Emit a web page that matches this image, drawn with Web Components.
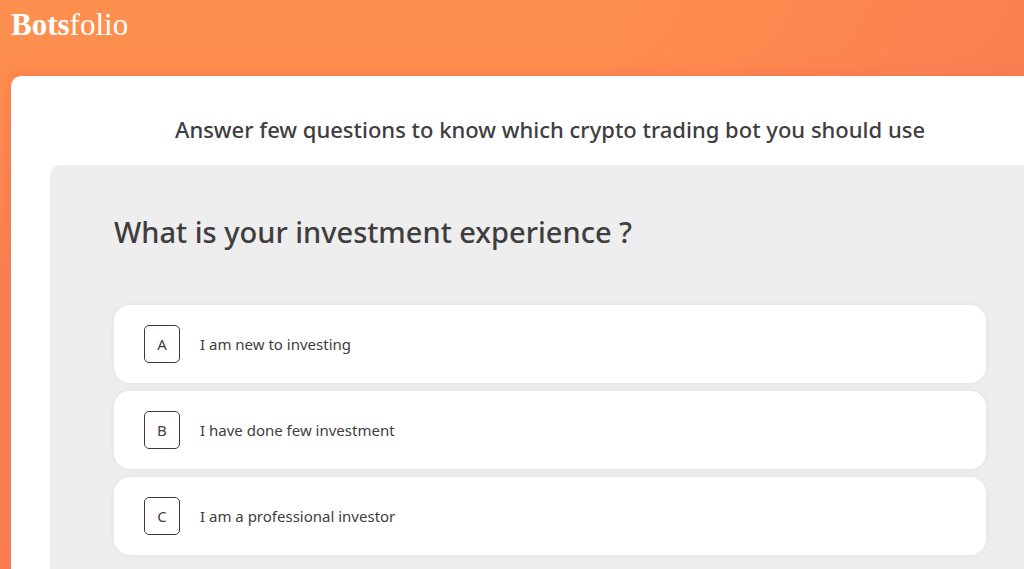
<!DOCTYPE html>
<html lang="en">
<head>
<meta charset="utf-8">
<meta name="viewport" content="width=device-width, initial-scale=1">
<title>Botsfolio</title>
<style>
  body {
    margin: 0;
    font-family: "Noto Sans", "Open Sans", sans-serif;
    color: #3f3d40;
  }
</style>
</head>
<body>
<quiz-page>
  <brand-logo slot="brand"></brand-logo>
  <quiz-panel>
    <span slot="title">Answer few questions to know which crypto trading bot you should use</span>
    <quiz-question>
      <span slot="question">What is your investment experience ?</span>
      <quiz-option key="A">I am new to investing</quiz-option>
      <quiz-option key="B">I have done few investment</quiz-option>
      <quiz-option key="C">I am a professional investor</quiz-option>
    </quiz-question>
  </quiz-panel>
</quiz-page>

<script>
class BaseElement extends HTMLElement {
  constructor() {
    super();
    this.attachShadow({ mode: "open" }).innerHTML = this.constructor.markup;
  }
}

customElements.define("quiz-page", class extends BaseElement {
  static markup = `
    <style>
      :host {
        display: flex;
        flex-direction: column;
        min-height: 100vh;
        background:
          linear-gradient(120deg, rgba(250, 127, 80, 0) 46%, #fa7f50 78%),
          linear-gradient(#ff8f4f 16%, #fa7f50 50%);
        overflow: hidden;
      }
      header { padding: 7px 11px 33px; }
      /* the sheet runs past the right side of the window */
      main {
        display: flex;
        flex: 1;
        margin: 0 -65px 0 11px;
      }
      ::slotted(quiz-panel) { flex: 1; }
    </style>
    <header><slot name="brand"></slot></header>
    <main><slot></slot></main>`;
});

customElements.define("brand-logo", class extends BaseElement {
  static markup = `
    <style>
      :host { display: flex; }
      a {
        font: 31px/36px "Liberation Serif", "Times New Roman", serif;
        color: #fff;
        text-decoration: none;
      }
    </style>
    <a href="#"><b>Bots</b>folio</a>`;
});

customElements.define("quiz-panel", class extends BaseElement {
  static markup = `
    <style>
      :host {
        display: flex;
        flex-direction: column;
        padding: 35px 39px 0;
        background: #fff;
        border-radius: 10px 10px 0 0;
        box-shadow: 0 0 16px 2px #f87850;
      }
      h1 {
        margin: 0 0 18px;
        font-size: 22px;
        line-height: 36px;
        font-weight: 500;
        text-align: center;
      }
      ::slotted(quiz-question) { flex: 1; }
    </style>
    <h1><slot name="title"></slot></h1>
    <slot></slot>`;
});

customElements.define("quiz-question", class extends BaseElement {
  static markup = `
    <style>
      :host {
        display: block;
        padding: 43px 64px 14px;
        background: #eee;
        border-radius: 10px 10px 0 0;
      }
      h2 {
        margin: 0 0 49px;
        font-size: 29px;
        line-height: 48px;
        font-weight: 500;
      }
      .options { display: grid; gap: 8px; }
    </style>
    <h2><slot name="question"></slot></h2>
    <div class="options"><slot></slot></div>`;
});

customElements.define("quiz-option", class extends BaseElement {
  static markup = `
    <style>
      :host { display: block; }
      button {
        display: flex;
        align-items: center;
        gap: 20px;
        width: 100%;
        padding: 20px 30px;
        border: 0;
        border-radius: 16px;
        background: #fff;
        box-shadow: 0 0 6px rgba(0, 0, 0, .06);
        font: inherit;
        font-size: 15px;
        line-height: 20px;
        color: inherit;
        text-align: left;
        cursor: pointer;
      }
      .key {
        box-sizing: border-box;
        width: 36px;
        padding: 8px 0;
        border: 1px solid #3f3638;
        border-radius: 5px;
        text-align: center;
      }
    </style>
    <button type="button"><span class="key"></span><slot></slot></button>`;
  connectedCallback() {
    this.shadowRoot.querySelector(".key").textContent = this.getAttribute("key");
  }
});
</script>
</body>
</html>
